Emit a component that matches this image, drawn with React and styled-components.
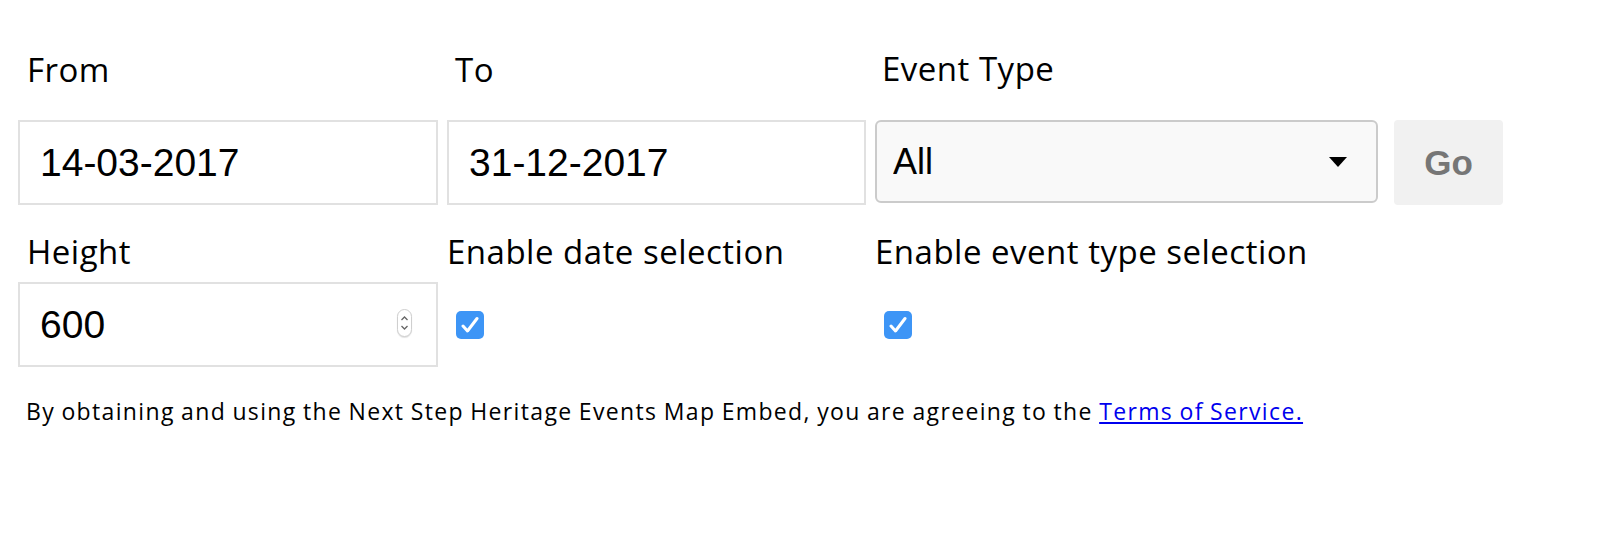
import React, { useState } from 'react';
import styled, { createGlobalStyle } from 'styled-components';

const GlobalStyle = createGlobalStyle`
  body {
    margin: 0;
    background: #ffffff;
    font-family: "Open Sans", sans-serif;
    color: #000000;
  }
`;

const Page = styled.div`
  padding: 46px 18px 0 18px;
`;

const Row = styled.div`
  display: flex;
  align-items: flex-end;
  gap: 9px;
  margin-bottom: ${(p) => p.$after}px;
`;

const Field = styled.div`
  display: flex;
  flex-direction: column;
  width: ${(p) => p.$width}px;
`;

const Label = styled.label`
  font-family: "Open Sans", sans-serif;
  font-size: 33px;
  line-height: 45px;
  letter-spacing: 0.5px;
  padding-left: ${(p) => p.$indent}px;
  margin-bottom: ${(p) => p.$gap}px;
  white-space: nowrap;
`;

const TextInput = styled.input`
  box-sizing: border-box;
  width: 100%;
  height: 85px;
  border: 2px solid #e1e1e1;
  border-radius: 0;
  padding: 0 20px;
  font-family: "Liberation Sans", Arial, sans-serif;
  font-size: 39px;
  color: #000000;
  background: #ffffff;
  outline: none;
`;

const NumberWrap = styled.div`
  position: relative;
`;

const Spinner = styled.span`
  position: absolute;
  right: 26px;
  top: 27px;
  width: 15px;
  height: 28px;
  box-sizing: border-box;
  border: 1px solid #cfcfcf;
  border-radius: 8px;
  background: #ffffff;
  box-shadow: 0 1px 1px rgba(0, 0, 0, 0.12);
  display: flex;
  align-items: center;
  justify-content: center;
`;

const SelectWrap = styled.div`
  position: relative;
  margin-bottom: 2px;
`;

const Select = styled.select`
  appearance: none;
  box-sizing: border-box;
  width: 100%;
  height: 83px;
  border: 2px solid #cbcbcb;
  border-radius: 6px;
  background: #f9f9f9;
  padding: 0 16px;
  font-family: "Liberation Sans", Arial, sans-serif;
  font-size: 36px;
  color: #000000;
  outline: none;
`;

const Caret = styled.svg`
  position: absolute;
  right: 31px;
  top: 37px;
  pointer-events: none;
`;

const GoButton = styled.button`
  width: 109px;
  height: 85px;
  margin-left: 7px;
  border: none;
  border-radius: 4px;
  background: #f1f1f1;
  color: #767676;
  font-family: "Liberation Sans", Arial, sans-serif;
  font-weight: bold;
  font-size: 35px;
  cursor: pointer;
`;

const CheckCell = styled.div`
  height: 85px;
  display: flex;
  align-items: center;
  padding-left: 9px;
`;

const Check = styled.span`
  width: 28px;
  height: 28px;
  border-radius: 5px;
  background: ${(p) => (p.$on ? '#3d95f6' : '#ffffff')};
  border: ${(p) => (p.$on ? 'none' : '1px solid #b5b5b5')};
  box-sizing: border-box;
  display: flex;
  align-items: center;
  justify-content: center;
  cursor: pointer;
`;

const Notice = styled.p`
  margin: 0;
  padding-left: 8px;
  font-family: "Open Sans", sans-serif;
  font-size: 23px;
  line-height: 30px;
  letter-spacing: 1.35px;
  word-spacing: -1px;
`;

const Link = styled.a`
  color: #0000ee;
  text-decoration: underline;
`;

const Checkbox = ({ on, onToggle }) => (
  <Check $on={on} onClick={onToggle}>
    {on && (
      <svg width="18" height="18" viewBox="0 0 18 18">
        <path
          d="M2 10 L6.5 15 L16 2.5"
          fill="none"
          stroke="#ffffff"
          strokeWidth="3"
          strokeLinecap="round"
          strokeLinejoin="round"
        />
      </svg>
    )}
  </Check>
);

const App = () => {
  const [from, setFrom] = useState('14-03-2017');
  const [to, setTo] = useState('31-12-2017');
  const [height, setHeight] = useState('600');
  const [dateSel, setDateSel] = useState(true);
  const [typeSel, setTypeSel] = useState(true);

  return (
    <Page>
      <GlobalStyle />
      <Row $after={24}>
        <Field $width={420}>
          <Label $indent={9} $gap={28}>From</Label>
          <TextInput value={from} onChange={(e) => setFrom(e.target.value)} />
        </Field>
        <Field $width={419}>
          <Label $indent={8} $gap={28}>To</Label>
          <TextInput value={to} onChange={(e) => setTo(e.target.value)} />
        </Field>
        <Field $width={503}>
          <Label $indent={7} $gap={29}>Event Type</Label>
          <SelectWrap>
            <Select defaultValue="all">
              <option value="all">All</option>
              <option value="talks">Talks</option>
              <option value="walks">Walks</option>
            </Select>
            <Caret width="18" height="10" viewBox="0 0 18 10">
              <path d="M0 0 H18 L9 10 Z" fill="#000000" />
            </Caret>
          </SelectWrap>
        </Field>
        <GoButton>Go</GoButton>
      </Row>

      <Row $after={29}>
        <Field $width={420}>
          <Label $indent={9} $gap={8}>Height</Label>
          <NumberWrap>
            <TextInput value={height} onChange={(e) => setHeight(e.target.value)} />
            <Spinner>
              <svg width="9" height="20" viewBox="0 0 9 20">
                <path d="M1.5 7 L4.5 4 L7.5 7" fill="none" stroke="#666" strokeWidth="1.3" />
                <path d="M1.5 13 L4.5 16 L7.5 13" fill="none" stroke="#666" strokeWidth="1.3" />
              </svg>
            </Spinner>
          </NumberWrap>
        </Field>
        <Field $width={419}>
          <Label $indent={-3} $gap={8}>Enable date selection</Label>
          <CheckCell>
            <Checkbox on={dateSel} onToggle={() => setDateSel(!dateSel)} />
          </CheckCell>
        </Field>
        <Field $width={503}>
          <Label $indent={-2} $gap={8}>Enable event type selection</Label>
          <CheckCell>
            <Checkbox on={typeSel} onToggle={() => setTypeSel(!typeSel)} />
          </CheckCell>
        </Field>
      </Row>

      <Notice>
        By obtaining and using the Next Step Heritage Events Map Embed, you are agreeing to the{' '}
        <Link href="#">Terms of Service.</Link>
      </Notice>
    </Page>
  );
};

export default App;
